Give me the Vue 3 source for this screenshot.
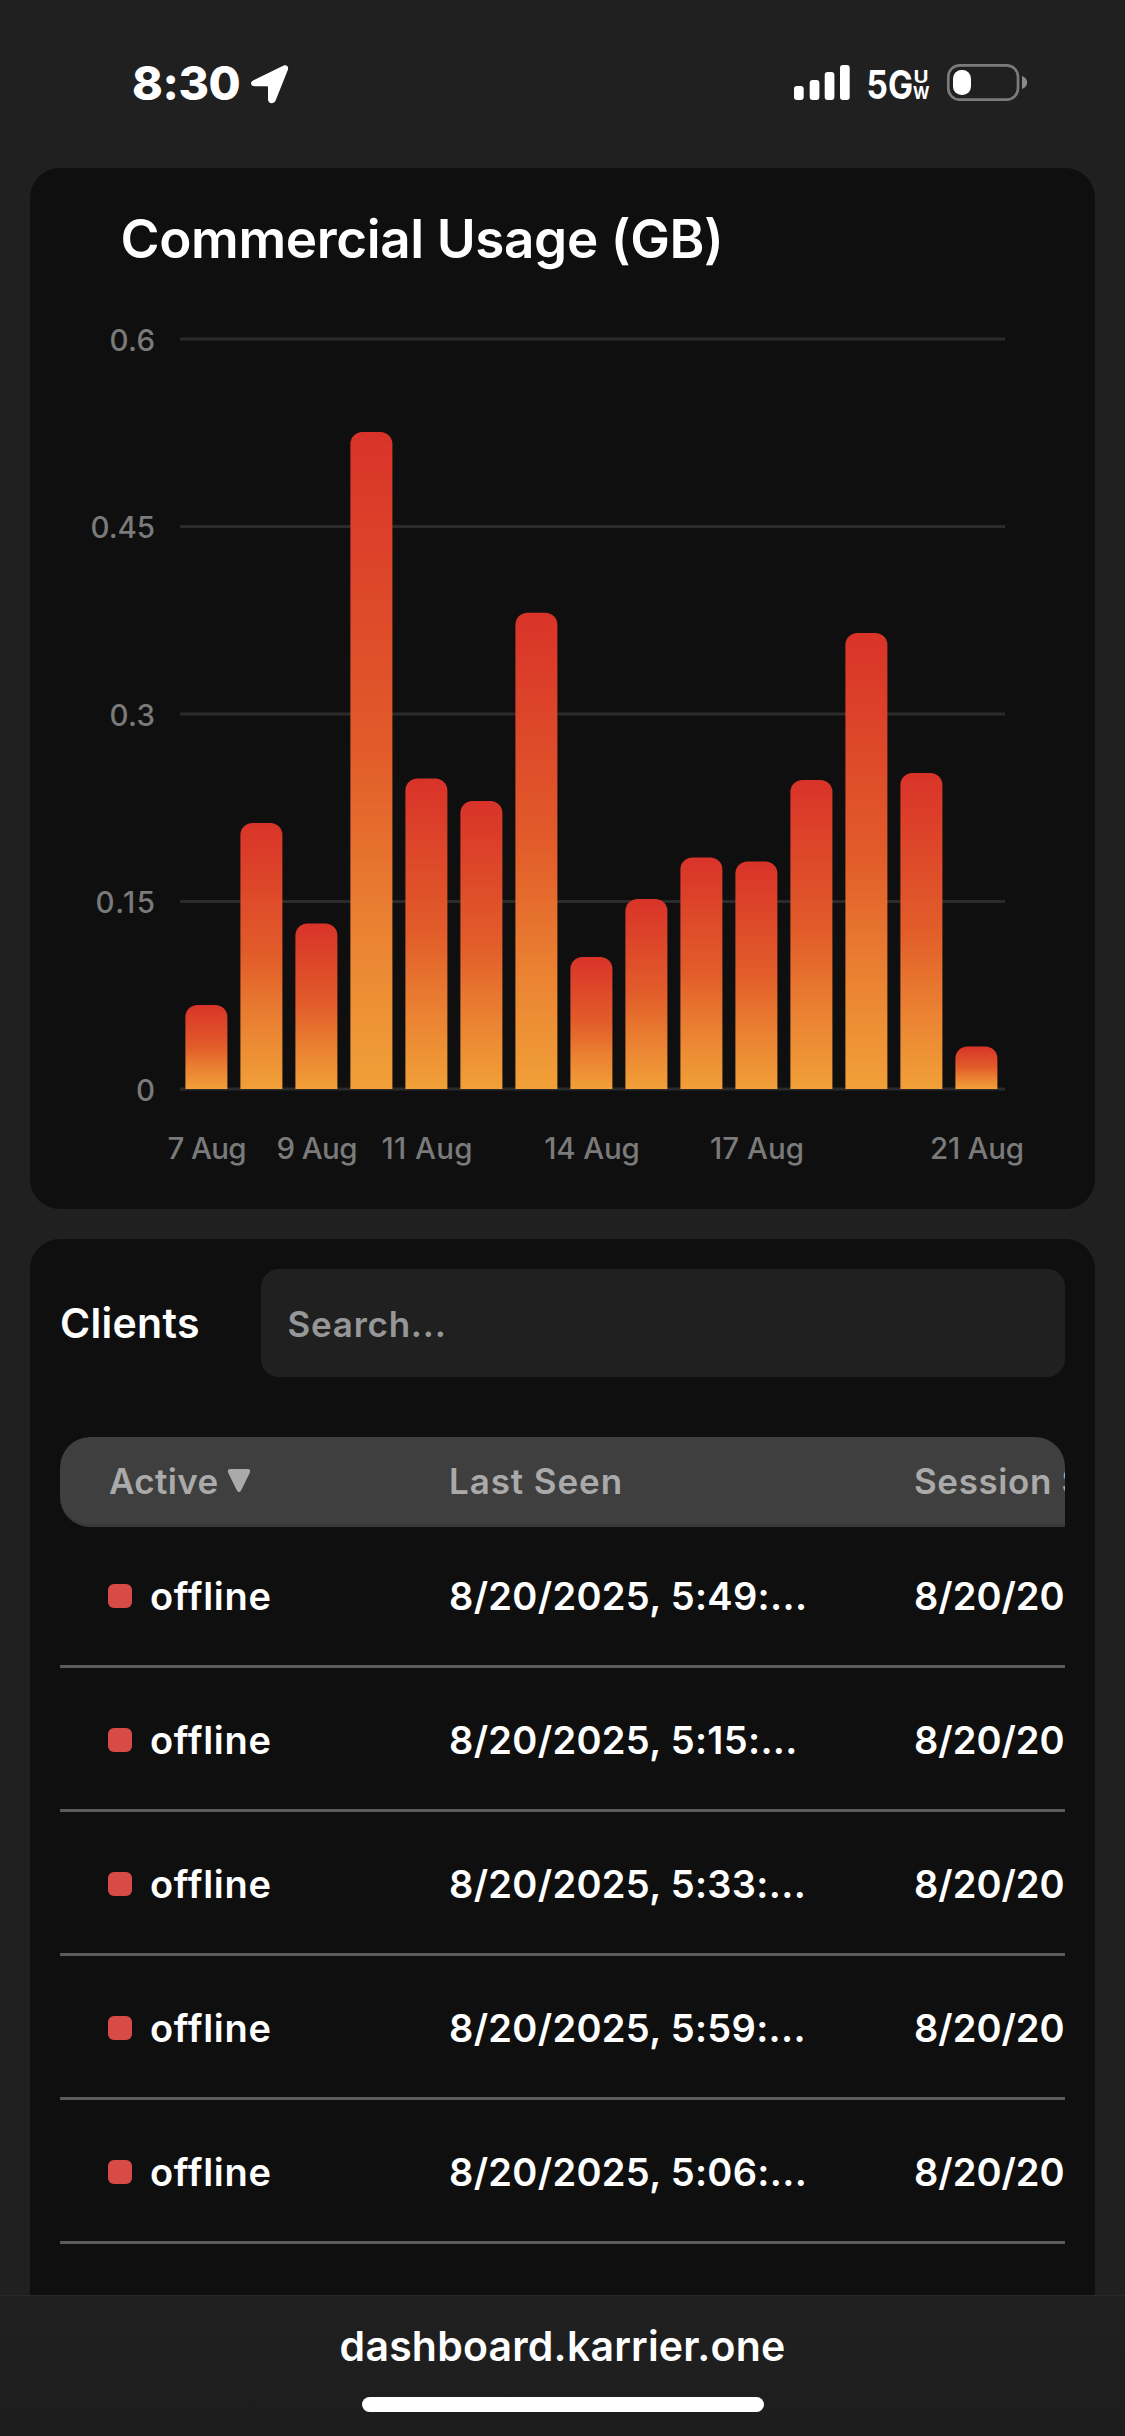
<script setup>
const PLOT_LEFT = 180
const PLOT_RIGHT = 1005
const BASE = 921
const BAND = 55

const ticks = [
  { label: '0.6', y: 171, width: 45.5 },
  { label: '0.45', y: 358.5, width: 64.5 },
  { label: '0.3', y: 546, width: 45.5 },
  { label: '0.15', y: 733.5, width: 59.5 },
  { label: '0', y: 921, width: 18.5 },
]

const heights = [84, 266, 165.5, 657, 310.5, 288, 476.3, 132, 190, 231.5, 227.5, 309, 456, 316, 42.5]
const bars = heights.map((h, i) => {
  const x = PLOT_LEFT + BAND * i + 5.4
  const top = BASE - h
  return `M${x} ${BASE}V${top + 12}a12 12 0 0 1 12-12h18a12 12 0 0 1 12 12V${BASE}z`
})

const dates = [
  { label: '7 Aug', slot: 0, width: 79 },
  { label: '9 Aug', slot: 2, width: 81 },
  { label: '11 Aug', slot: 4, width: 91 },
  { label: '14 Aug', slot: 7, width: 95.5 },
  { label: '17 Aug', slot: 10, width: 94 },
  { label: '21 Aug', slot: 14, width: 94 },
]

const clients = ['5:49', '5:15', '5:33', '5:59', '5:06'].map((time) => ({
  status: 'offline',
  lastSeen: `8/20/2025, ${time}:...`,
  session: '8/20/20',
}))
</script>

<template>
  <div class="screen">
    <header class="status">
      <div class="clock">
        <span class="time">8:30</span>
        <svg class="arrow" width="40" height="40" viewBox="0 0 40 40">
          <path d="M3.6 16.3 33.2 1.8c3.2-1.5 5.9 1 4.6 4.3L25.6 36.6c-1.8 4.2-7.6 3.3-7.6-1.3V23.6c0-.9-.5-1.4-1.4-1.4H5C.3 22.2-.4 18.2 3.6 16.3z" fill="#fff" />
        </svg>
      </div>
      <svg class="indicators" width="236" height="44" viewBox="792 61 236 44">
        <g fill="#fff">
          <rect x="794" y="86" width="9.7" height="14" rx="3" />
          <rect x="809.7" y="80" width="9.7" height="20" rx="3" />
          <rect x="824.7" y="72" width="9.7" height="28" rx="3" />
          <rect x="840" y="65" width="9.7" height="35" rx="3" />
          <text x="866.5" y="98.7" font-size="39" font-weight="750" textLength="46.5" lengthAdjust="spacingAndGlyphs">5G</text>
          <text x="913.5" y="82.7" font-size="17.5" font-weight="750" textLength="15" lengthAdjust="spacingAndGlyphs">U</text>
          <text x="913" y="98.7" font-size="17.5" font-weight="750" textLength="16.5" lengthAdjust="spacingAndGlyphs">W</text>
          <rect x="953" y="70" width="18" height="25" rx="8.5" />
        </g>
        <rect x="948.3" y="65.3" width="69.7" height="34.4" rx="11.5" fill="none" stroke="#7b7b7b" stroke-width="2.7" />
        <path d="M1022 76c3 1 5.2 3.6 5.2 6.5s-2.2 5.5-5.2 6.5z" fill="#8a8a8a" />
      </svg>
    </header>

    <section class="card usage">
      <h2>Commercial Usage (GB)</h2>
      <svg class="chart" width="1065" height="1041" viewBox="30 0 1065 1041">
        <defs>
          <linearGradient id="heat" x1="0" y1="0" x2="0" y2="1">
            <stop offset="0" stop-color="#d93329" />
            <stop offset="0.5" stop-color="#e25d2a" />
            <stop offset="0.75" stop-color="#ea8132" />
            <stop offset="1" stop-color="#f1a038" />
          </linearGradient>
        </defs>
        <g stroke="#2b2b2b" stroke-width="3">
          <line v-for="t in ticks" :key="t.label" :x1="PLOT_LEFT" :x2="PLOT_RIGHT" :y1="t.y" :y2="t.y" />
        </g>
        <g class="axis" text-anchor="end">
          <text v-for="t in ticks" :key="t.label" x="155" :y="t.y + 11.5" :textLength="t.width">{{ t.label }}</text>
        </g>
        <path v-for="(d, i) in bars" :key="i" :d="d" fill="url(#heat)" />
        <g class="axis" text-anchor="middle">
          <text v-for="d in dates" :key="d.label" :x="PLOT_LEFT + BAND * (d.slot + 0.5) - 0.5" y="991" :textLength="d.width">{{ d.label }}</text>
        </g>
      </svg>
    </section>

    <section class="card clients">
      <div class="toolbar">
        <h3>Clients</h3>
        <div class="search">Search...</div>
      </div>
      <div class="table">
        <div class="row head">
          <span class="active">Active
            <svg width="24" height="24" viewBox="0 0 24 24"><path d="M3.5 0h17c2.400 0 3.300 1.700 2.300 3.700l-8.600 17.500c-1.200 2.400-3.200 2.400-4.400 0L1.200 3.700C.2 1.700 1.100 0 3.500 0z" fill="#aaa" /></svg>
          </span>
          <span>Last Seen</span>
          <span class="started">Session Start</span>
        </div>
        <div v-for="c in clients" :key="c.lastSeen" class="row">
          <span class="state"><i></i>{{ c.status }}</span>
          <span class="seen">{{ c.lastSeen }}</span>
          <span class="session">{{ c.session }}</span>
        </div>
      </div>
    </section>

    <footer class="browser">
      <span class="url">dashboard.karrier.one</span>
      <span class="home"></span>
    </footer>
  </div>
</template>

<style>
body {
  background: #202020;
}
</style>

<style scoped>
.screen {
  display: flex;
  flex-direction: column;
  width: 1125px;
  height: 2436px;
  overflow: hidden;
  background: #202020;
  color: #fff;
  font-family: Inter, "Liberation Sans", sans-serif;
  font-weight: 560;
  white-space: nowrap;
}

.status {
  display: flex;
  flex: none;
  justify-content: space-between;
  box-sizing: border-box;
  height: 168px;
  padding: 61px 97px 0 132px;
}

.clock {
  display: flex;
  align-items: center;
  gap: 10px;
  height: 44px;
}

.time {
  font-size: 46.5px;
  font-weight: 780;
  letter-spacing: -0.4px;
  line-height: 44px;
}

.arrow {
  margin-top: 2px;
}

.card {
  flex: none;
  margin: 0 30px;
  border-radius: 30px;
  background: #0f0f0f;
}

.usage {
  display: grid;
  height: 1041px;
}

.usage > * {
  grid-area: 1 / 1;
}

h2 {
  margin: 39px 0 0 90.5px;
  font-size: 53px;
  font-weight: 580;
  letter-spacing: -0.38px;
  line-height: 64px;
}

.chart {
  display: block;
}

.axis {
  fill: #7a7a7a;
  font-size: 29.5px;
  font-weight: 500;
}

.clients {
  flex: 1;
  min-height: 0;
  margin-top: 30px;
  padding: 30px 30px 0;
  border-radius: 30px 30px 0 0;
  overflow: hidden;
}

.toolbar {
  display: flex;
  align-items: center;
  justify-content: space-between;
}

h3 {
  margin: 0;
  font-size: 41px;
  font-weight: 560;
  letter-spacing: 0.3px;
}

.search {
  box-sizing: border-box;
  width: 804px;
  height: 108px;
  padding: 1px 26.5px 0;
  border-radius: 18px;
  background: #202020;
  color: #979797;
  font-size: 35px;
  letter-spacing: 0.75px;
  line-height: 108px;
}

.table {
  margin-top: 60px;
  border-radius: 30px 30px 0 0;
  overflow: hidden;
}

.row {
  display: grid;
  grid-template-columns: 341px 465px 300px;
  align-items: center;
  box-sizing: border-box;
  height: 144px;
  padding: 3px 0 0 48px;
  border-bottom: 3px solid #5b5b5b;
  font-size: 38px;
}

.head {
  height: 90px;
  margin-bottom: -3px;
  padding-top: 0;
  border-bottom-color: #383838;
  border-radius: 30px 0 0 30px;
  background: #3f3f3f;
  color: #aaa;
  font-size: 35px;
  letter-spacing: 0.9px;
}

.active {
  display: flex;
  align-items: flex-start;
  gap: 8px;
  padding-left: 1px;
  letter-spacing: 0.35px;
}

.active svg {
  margin-top: 9px;
}

.started {
  letter-spacing: 0.6px;
}

.state {
  display: flex;
  align-items: center;
  gap: 18px;
  letter-spacing: 0.7px;
}

.state i {
  width: 24px;
  height: 24px;
  border-radius: 6px;
  background: #d84a45;
}

.seen {
  letter-spacing: 0.32px;
}

.session {
  letter-spacing: 0;
}

.browser {
  display: flex;
  flex: none;
  flex-direction: column;
  align-items: center;
  box-sizing: border-box;
  height: 141px;
  border-top: 1px solid #292929;
  background: linear-gradient(#202020, #1d1d1d);
}

.url {
  margin-top: 25px;
  font-size: 41px;
  letter-spacing: 0.2px;
  line-height: 50px;
}

.home {
  width: 402px;
  height: 15px;
  margin-top: 26px;
  border-radius: 8px;
  background: #fff;
}
</style>
